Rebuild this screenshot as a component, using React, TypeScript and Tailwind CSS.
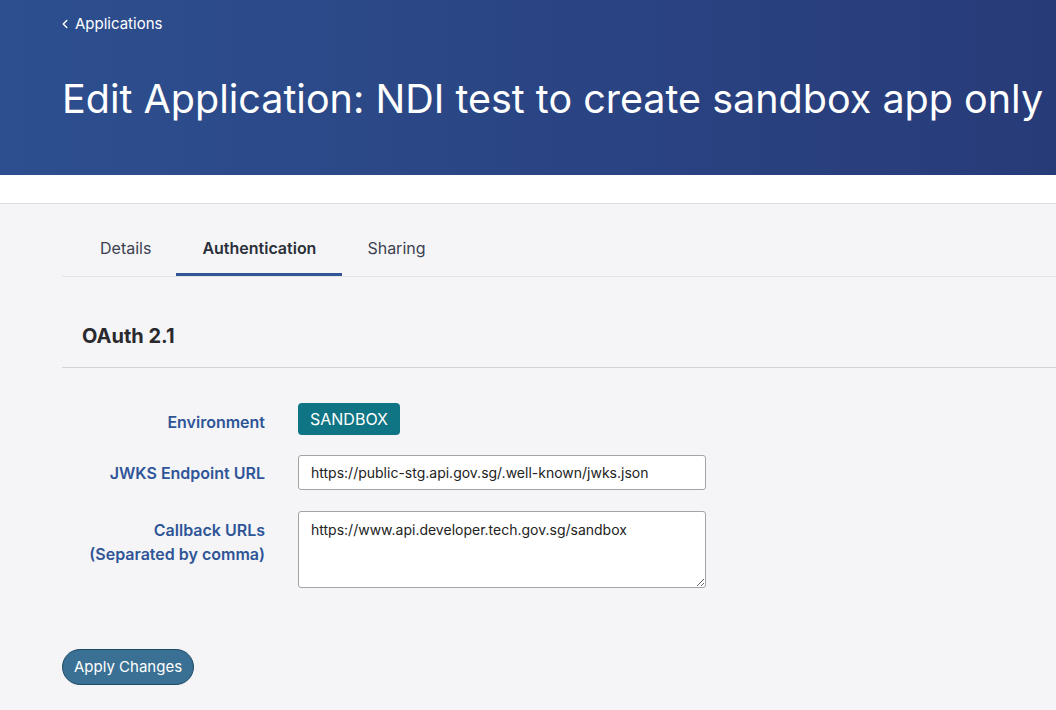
import { ChevronLeft } from 'lucide-react';

const font = { fontFamily: 'Inter, "Noto Sans", sans-serif' };

function Tab({ label, active }: { label: string; active?: boolean }) {
  return (
    <div
      className={
        active
          ? 'px-[26px] h-full flex items-center font-semibold text-[#2a2f3a] border-b-[3px] border-[#2f5597] pb-[2px]'
          : 'px-[25px] h-full flex items-center text-[#3b4150] pb-[5px]'
      }
    >
      {label}
    </div>
  );
}

export default function App() {
  return (
    <div className="min-h-[710px] bg-[#f5f5f7] text-[15px]" style={font}>
      {/* header */}
      <div className="h-[175px] bg-gradient-to-r from-[#2d4f8f] to-[#283b79] px-[62px] pt-[14px] text-white">
        <div className="flex items-center gap-[3px] h-[20px]">
          <ChevronLeft size={14} strokeWidth={2.5} className="-ml-[4px]" />
          <span className="text-[15px]">Applications</span>
        </div>
        <h1 className="mt-[40px] text-[39.5px] leading-[50px] whitespace-nowrap">
          Edit Application: NDI test to create sandbox app only
        </h1>
      </div>
      <div className="h-[29px] bg-white border-b border-[#dedee2]" />

      <div className="pl-[62px]">
        {/* tabs */}
        <div className="mt-[20px] h-[53px] flex pl-[13px] text-[16px] border-b border-[#e4e4e8]">
          <Tab label="Details" />
          <Tab label="Authentication" active />
          <Tab label="Sharing" />
        </div>

        {/* oauth */}
        <div className="h-[91px] pt-[45px] pl-5 border-b border-[#d3d3d8]">
          <h2 className="text-[20px] leading-[28px] font-bold text-[#2a2a2e]">OAuth 2.1</h2>
        </div>

        <div className="pt-[41px] flex flex-col text-[16px]">
          <div className="flex items-center">
            <div className="w-[203px] text-right font-semibold text-[#2f5597]">Environment</div>
            <div className="ml-[33px] bg-[#0f7584] text-white rounded-[4px] px-3 h-[32px] flex items-center -mt-[6px]">
              SANDBOX
            </div>
          </div>

          <div className="flex items-center mt-[20px]">
            <div className="w-[203px] text-right font-semibold text-[#2f5597]">JWKS Endpoint URL</div>
            <input
              readOnly
              value="https://public-stg.api.gov.sg/.well-known/jwks.json"
              className="ml-[33px] w-[408px] h-[35px] bg-white border border-[#a3a3a8] rounded-[3px] px-3 text-[14px] text-[#222] outline-none"
              style={font}
            />
          </div>

          <div className="flex items-start mt-[21px]">
            <div className="w-[203px] text-right font-semibold text-[#2f5597] leading-[24px] pt-[7px]">
              Callback URLs
              <br />
              (Separated by comma)
            </div>
            <textarea
              readOnly
              value="https://www.api.developer.tech.gov.sg/sandbox"
              className="ml-[33px] w-[408px] h-[77px] bg-white border border-[#a3a3a8] rounded-[3px] px-3 py-[7px] text-[14px] text-[#222] outline-none"
              style={font}
            />
          </div>
        </div>

        <button className="mt-[61px] h-[36px] px-[11px] rounded-full bg-[#3a7094] border border-[#1f4a66] text-white text-[15px]">
          Apply Changes
        </button>
      </div>
    </div>
  );
}
